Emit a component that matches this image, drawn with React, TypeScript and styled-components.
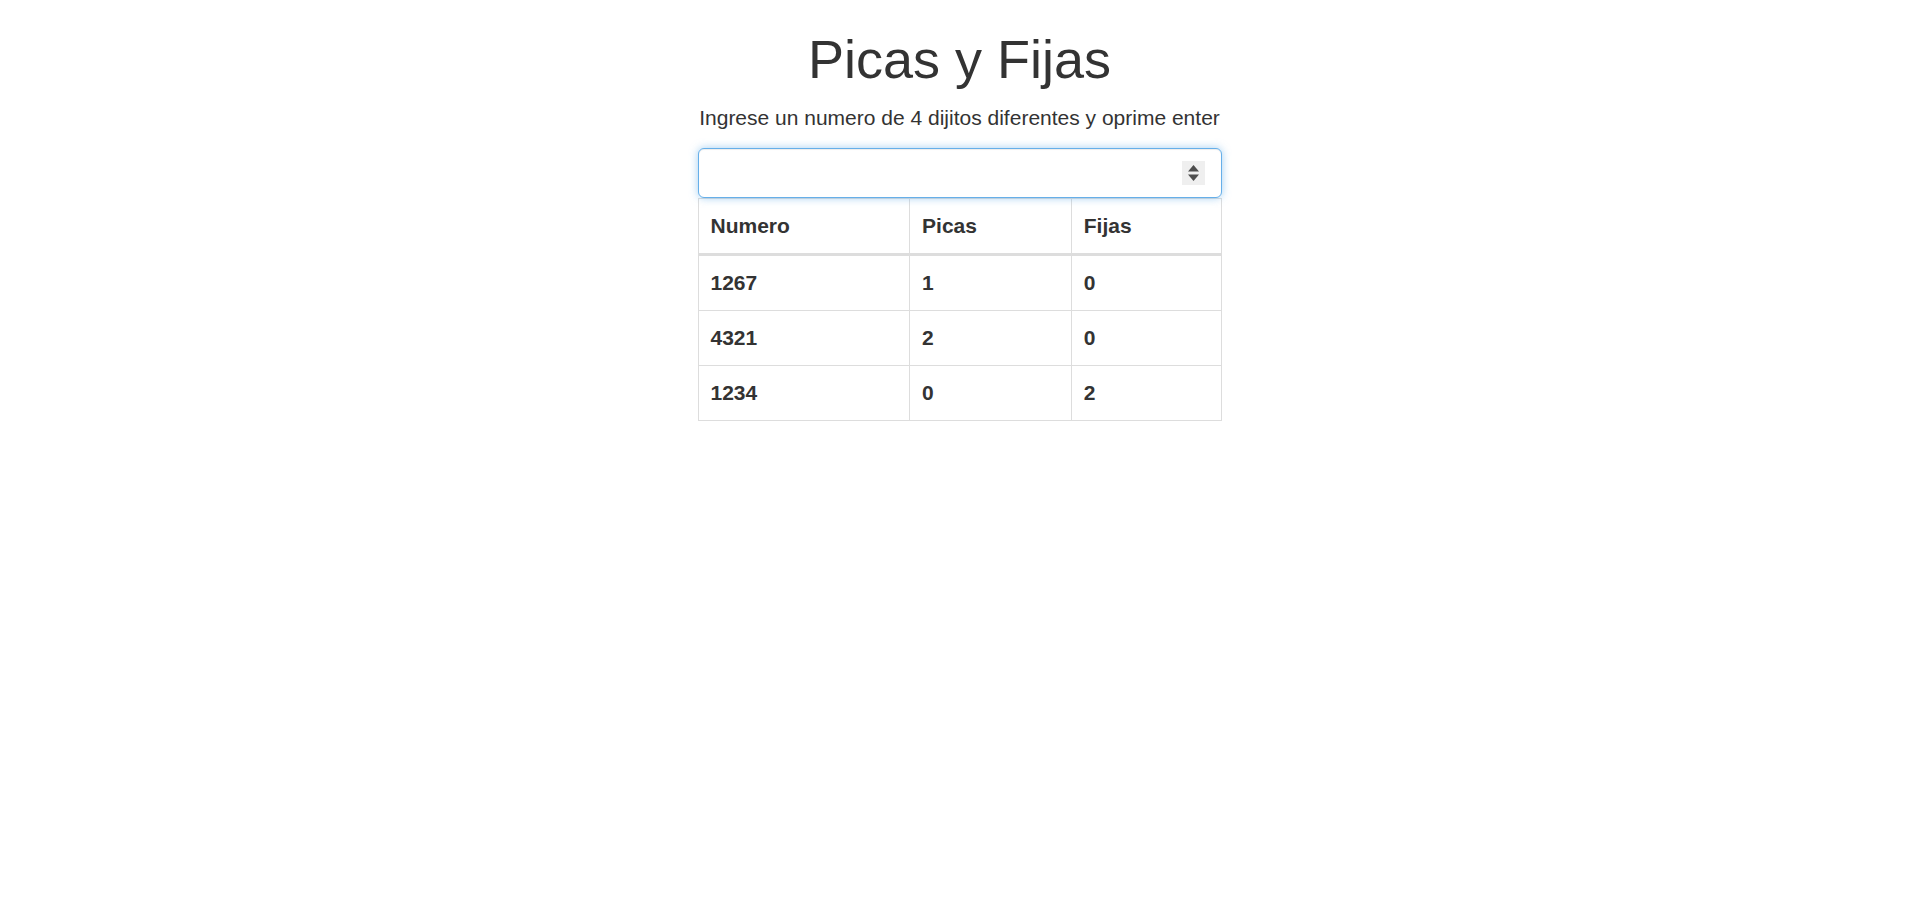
import React from "react";
import styled, { createGlobalStyle } from "styled-components";

const GlobalStyle = createGlobalStyle`
  html, body {
    margin: 0;
    padding: 0;
    background: #fff;
  }
  body {
    font-family: "Liberation Sans", Arial, Helvetica, sans-serif;
    color: #333;
    font-size: 21px;
    line-height: 30px;
  }
  * { box-sizing: border-box; }
`;

const Page = styled.main`
  display: flex;
  flex-direction: column;
  align-items: center;
`;

const Title = styled.h1`
  margin: 30px 0 14px;
  font-size: 54px;
  line-height: 59.4px;
  font-weight: 500;
  color: #333;
  text-align: center;
`;

const Subtitle = styled.p`
  margin: 0 0 15px;
  font-size: 21px;
  line-height: 30px;
  text-align: center;
  color: #333;
`;

const Panel = styled.section`
  width: 524px;
  display: flex;
  flex-direction: column;
`;

const InputWrap = styled.div`
  position: relative;
  height: 50px;
`;

const NumberInput = styled.input`
  display: block;
  width: 100%;
  height: 50px;
  padding: 9px 18px;
  font-family: inherit;
  font-size: 21px;
  color: #555;
  background: #fff;
  border: 1.5px solid #66afe9;
  border-radius: 6px;
  outline: 0;
  box-shadow: inset 0 1px 1px rgba(0, 0, 0, 0.075), 0 0 8px rgba(102, 175, 233, 0.6);
  -moz-appearance: textfield;
  &::-webkit-outer-spin-button,
  &::-webkit-inner-spin-button {
    -webkit-appearance: none;
    margin: 0;
  }
`;

const Spinner = styled.span`
  position: absolute;
  right: 17px;
  top: 13px;
  width: 23px;
  height: 24px;
  background: #efefef;
  display: flex;
  align-items: center;
  justify-content: center;
  pointer-events: none;
`;

const Table = styled.table`
  width: 524px;
  border-collapse: collapse;
  border-spacing: 0;
  border: 1px solid #ddd;
`;

const HeadCell = styled.th<{ $w: number }>`
  width: ${(p) => p.$w}px;
  padding: 12px;
  text-align: left;
  font-weight: bold;
  font-size: 21px;
  line-height: 30px;
  color: #333;
  border: 1px solid #ddd;
  border-bottom: 3px solid #ddd;
  vertical-align: bottom;
`;

const Cell = styled.td`
  padding: 12px;
  font-weight: bold;
  font-size: 21px;
  line-height: 30px;
  color: #333;
  border: 1px solid #ddd;
`;

const rows = [
  ["1267", "1", "0"],
  ["4321", "2", "0"],
  ["1234", "0", "2"],
];

export default function App() {
  return (
    <>
      <GlobalStyle />
      <Page>
        <Title>Picas y Fijas</Title>
        <Subtitle>Ingrese un numero de 4 dijitos diferentes y oprime enter</Subtitle>
        <Panel>
          <InputWrap>
            <NumberInput type="number" aria-label="numero" />
            <Spinner>
              <svg width="13" height="18" viewBox="0 0 13 18">
                <path d="M6.5 1 L12 7.5 L1 7.5 Z" fill="#4d4d4d" />
                <path d="M1 10.5 L12 10.5 L6.5 17 Z" fill="#4d4d4d" />
              </svg>
            </Spinner>
          </InputWrap>
          <Table>
            <thead>
              <tr>
                <HeadCell $w={212}>Numero</HeadCell>
                <HeadCell $w={162}>Picas</HeadCell>
                <HeadCell $w={150}>Fijas</HeadCell>
              </tr>
            </thead>
            <tbody>
              {rows.map((r) => (
                <tr key={r[0]}>
                  {r.map((c, i) => (
                    <Cell key={i}>{c}</Cell>
                  ))}
                </tr>
              ))}
            </tbody>
          </Table>
        </Panel>
      </Page>
    </>
  );
}
